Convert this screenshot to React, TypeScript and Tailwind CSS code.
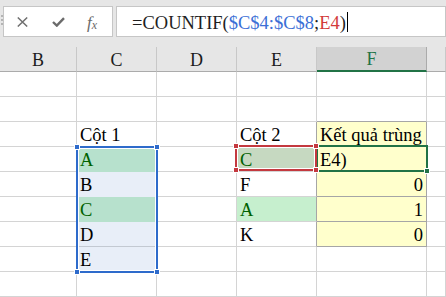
import React from "react";

type CellDef = { t?: string; cls?: string; r?: string; b?: string; right?: boolean };

const widths = ["w-[77px]", "w-[80px]", "w-[80px]", "w-[80px]", "w-[110px]", "flex-1"];
const heads = ["B", "C", "D", "E", "F", ""];

const DR = "border-r-[#a6a6a6]";
const DB = "border-b-[#a6a6a6]";
const YEL = "bg-[#ffffcc]";
const GREEN = "bg-[#b7e1cd] text-[#006100]";
const BLUE = "bg-[#e8eef8]";

const rows: CellDef[][] = [
  [{}, {}, {}, {}, {}, {}],
  [{}, {}, {}, {}, { b: DB }, {}],
  [{}, { t: "Cột 1" }, {}, { t: "Cột 2", r: DR }, { t: "Kết quả trùng", cls: YEL, r: DR, b: DB }, {}],
  [
    {},
    { t: "A", cls: GREEN, b: "border-b-[#b7e1cd]" },
    {},
    { t: "C", cls: "bg-[#c6d9c1] text-[#006100]", r: DR },
    { t: "E4)", cls: YEL, r: DR, b: DB },
    {},
  ],
  [{}, { t: "B", cls: BLUE, b: "border-b-[#e8eef8]" }, {}, { t: "F", r: DR }, { t: "0", cls: YEL, r: DR, b: DB, right: true }, {}],
  [
    {},
    { t: "C", cls: GREEN, b: "border-b-[#b7e1cd]" },
    {},
    { t: "A", cls: "bg-[#c6efce] text-[#006100]", r: DR },
    { t: "1", cls: YEL, r: DR, b: DB, right: true },
    {},
  ],
  [{}, { t: "D", cls: BLUE, b: "border-b-[#c3c9d2]" }, {}, { t: "K", r: DR }, { t: "0", cls: YEL, r: DR, b: DB, right: true }, {}],
  [{}, { t: "E", cls: BLUE }, {}, {}, {}, {}],
  [{}, {}, {}, {}, {}, {}],
];

function Cell({ w, t, cls = "", r = "border-r-[#d4d4d4]", b = "border-b-[#d4d4d4]", right }: CellDef & { w: string }) {
  return (
    <div
      className={`${w} h-[25px] shrink-0 border-r border-b ${r} ${b} flex items-end px-[3px] pb-[1px] leading-[20px] whitespace-nowrap ${
        right ? "justify-end" : ""
      } ${cls}`}
    >
      {t}
    </div>
  );
}

function Handle({ pos, color }: { pos: string; color: string }) {
  return <div className={`absolute w-[6px] h-[6px] border border-white ${pos} ${color}`} />;
}

export default function App() {
  return (
    <div className="w-[446px] h-[297px] overflow-hidden bg-white text-black font-['Liberation_Serif','Times_New_Roman',serif]">
      {/* formula bar */}
      <div className="h-[47px] bg-[#e6e6e6] flex items-start pt-[6px] overflow-hidden">
        <div className="w-[17px] h-[31px] flex flex-col items-start pl-[1px] pt-[9px] gap-[2px]">
          <span className="w-[2px] h-[2px] bg-[#b4b4b4]" />
          <span className="w-[2px] h-[2px] bg-[#b4b4b4]" />
          <span className="w-[2px] h-[2px] bg-[#b4b4b4]" />
        </div>
        <div className="w-[110px] h-[31px] shrink-0 border border-[#c6c6c6] bg-white flex items-center pl-[13px]">
          <svg width="11" height="10" viewBox="0 0 11 10">
            <path d="M0.8 0.5 L10.2 9.5 M10.2 0.5 L0.8 9.5" stroke="#707070" strokeWidth="1.5" fill="none" />
          </svg>
          <svg width="13" height="10" viewBox="0 0 13 10" className="ml-[24px]">
            <path d="M1 5 L4.8 8.6 L12 1.2" stroke="#6b6b6b" strokeWidth="2.4" fill="none" />
          </svg>
          <span className="ml-[22px] italic text-[17px] leading-[17px] text-[#6b6b6b] flex items-end pt-[1px]">
            f<span className="text-[12px] leading-[12px]">x</span>
          </span>
        </div>
        <div className="ml-[3px] w-[330px] h-[31px] shrink-0 border border-[#c6c6c6] bg-white flex items-center pl-[15px] pt-[3px] text-[18.5px] leading-[21px] whitespace-nowrap">
          <span className="text-[#1f1f1f]">=COUNTIF(</span>
          <span className="text-[#3b6fd6]">$C$4:$C$8</span>
          <span className="text-[#1f1f1f]">;</span>
          <span className="text-[#d23a3a]">E4</span>
          <span className="text-[#1f1f1f]">)</span>
          <span className="inline-block w-px h-[20px] bg-black ml-[1px] -mt-[3px]" />
        </div>
      </div>

      {/* column headers */}
      <div className="h-[25px] flex text-[18px] text-[#1c1c1c]">
        {heads.map((h, i) =>
          h === "F" ? (
            <div
              key={i}
              className={`${widths[i]} shrink-0 h-full bg-[#d2d2d2] border-r border-r-[#ababab] border-b-2 border-b-[#217346] flex items-center justify-center text-[#217346] leading-[20px] pt-[1px]`}
            >
              {h}
            </div>
          ) : (
            <div
              key={i}
              className={`${widths[i]} shrink-0 h-full bg-[#e6e6e6] border-r border-r-[#c8c8c8] border-b border-b-[#ababab] flex items-center justify-center leading-[20px] pt-[1px]`}
            >
              {h}
            </div>
          )
        )}
      </div>

      {/* sheet body */}
      <div className="relative text-[18.5px]">
        {rows.map((row, ri) => (
          <div key={ri} className="flex">
            {row.map((c, ci) => (
              <Cell key={ci} w={widths[ci]} {...c} />
            ))}
          </div>
        ))}

        {/* C4:C8 range */}
        <div className="absolute left-[76px] top-[74px] w-[82px] h-[127px] border-2 border-[#2e6bcb] shadow-[inset_0_0_0_1px_#fff]">
          <Handle pos="-left-[4px] -top-[4px]" color="bg-[#2e6bcb]" />
          <Handle pos="-right-[4px] -top-[4px]" color="bg-[#2e6bcb]" />
          <Handle pos="-left-[4px] -bottom-[4px]" color="bg-[#2e6bcb]" />
          <Handle pos="-right-[4px] -bottom-[4px]" color="bg-[#2e6bcb]" />
        </div>

        {/* active cell F4 */}
        <div className="absolute left-[316px] top-[73px] w-[112px] h-[27px] border-2 border-[#217346]">
          <Handle pos="-right-[4px] -bottom-[4px]" color="bg-[#217346]" />
        </div>

        {/* E4 reference */}
        <div className="absolute left-[235px] top-[73px] w-[82px] h-[26px] border-2 border-[#c4393f] shadow-[inset_0_0_0_1px_#fff]">
          <Handle pos="-left-[4px] -top-[4px]" color="bg-[#c4393f]" />
          <Handle pos="-right-[4px] -top-[4px]" color="bg-[#c4393f]" />
          <Handle pos="-left-[4px] -bottom-[4px]" color="bg-[#c4393f]" />
          <Handle pos="-right-[4px] -bottom-[4px]" color="bg-[#c4393f]" />
        </div>
      </div>
    </div>
  );
}
